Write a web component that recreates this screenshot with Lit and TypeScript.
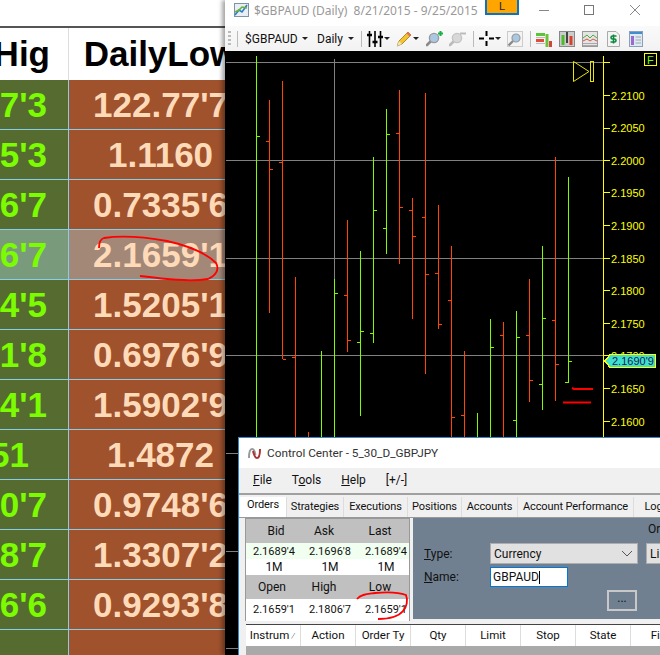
import {LitElement, css, html, svg} from 'lit';
import {customElement} from 'lit/decorators.js';

const ROWS = [
	["7'3", "122.77'7"],
	["5'3", '1.1160'],
	["6'7", "0.7335'6"],
	["6'7", "2.1659'1"],
	["4'5", "1.5205'1"],
	["1'8", "0.6976'9"],
	["4'1", "1.5902'9"],
	['51', '1.4872'],
	["0'7", "0.9748'6"],
	["8'7", "1.3307'2"],
	["6'6", "0.9293'8"],
	['', ''],
];

@customElement('quote-table')
export class QuoteTable extends LitElement {
	render() {
		return html`
			<div class="top"></div>
			<div class="row head">
				<div class="cell left">Hig</div>
				<div class="cell right">DailyLow</div>
			</div>
			${ROWS.map(
				([high, low], i) => html`
					<div class="row body ${i === 3 ? 'selected' : ''}">
						<div class="cell left ${high.length === 2 ? 'short' : ''}">${high}</div>
						<div class="cell right">${low}</div>
					</div>
				`
			)}
		`;
	}

	static styles = css`
		:host {
			display: block;
			width: 253px;
			height: 655px;
			overflow: hidden;
			background: #fff;
			font: bold 35px 'Liberation Sans', Arial, sans-serif;
		}

		.top {
			height: 26px;
			border-bottom: 2px solid #555;
		}

		.row {
			display: grid;
			grid-template-columns: 69px 183px;
			box-sizing: border-box;
		}

		.head {
			height: 52px;
			color: #000;
		}

		.body {
			height: 50px;
			border-bottom: 1px solid #87ceeb;
			background: linear-gradient(90deg, #556b2f 69px, #a0522d 69px);
		}

		.selected {
			background: linear-gradient(90deg, #7a9a7c 69px, #a38878 69px);
		}

		.cell {
			display: flex;
			align-items: center;
			white-space: nowrap;
			overflow: hidden;
		}

		.left {
			justify-content: flex-end;
			padding-right: 21px;
			box-sizing: border-box;
			color: #7cfc00;
		}

		.head .left {
			color: #000;
			padding-right: 18px;
			border-right: 1px solid #ddd;
		}

		.body .left {
			border-right: 1px solid #87ceeb;
		}

		.short {
			padding-right: 39px;
		}

		.right {
			justify-content: center;
			color: #ffdab9;
		}

		.head .right {
			color: #000;
		}
	`;
}

// x index, top, bottom, up bar?, open tick y, close tick y
type Bar = [number, number, number, boolean, number?, number?];

const BARS: Bar[] = [
	[0, 56, 437, true, undefined, 136],
	[1, 100, 313, false, 141, 169],
	[2, 81, 359, false, 162, 359],
	[3, 277, 437, false, 357],
	[4, 432, 437, false],
	[5, 351, 437, true],
	[6, 279, 437, true, undefined, 293],
	[7, 220, 352, false, 295, 340],
	[8, 251, 416, true, 342, 331],
	[9, 157, 343, true, 333, 210],
	[10, 109, 254, true, 228, 134],
	[11, 90, 264, false, 133, 207],
	[12, 198, 319, false, 210, 236],
	[13, 93, 374, false, 217, 274],
	[14, 205, 329, false, 273, 324],
	[15, 246, 437, false, 300, 417],
	[16, 351, 437, false, 415],
	[17, 413, 437, true],
	[18, 319, 437, true, undefined, 347],
	[19, 322, 437, false, 335],
	[20, 311, 437, true, 420, 337],
	[21, 279, 402, false, 335, 380],
	[22, 246, 410, true, 384, 318],
	[23, 157, 401, false, 320, 364],
	[24, 177, 382, true, 382, 361],
];

const AXIS = [
	[95.5, '2.2100'],
	[128, '2.2050'],
	[160.5, '2.2000'],
	[192.5, '2.1950'],
	[225.5, '2.1900'],
	[258.5, '2.1850'],
	[290.5, '2.1800'],
	[323.5, '2.1750'],
	[355.5, '2.1700'],
	[388.5, '2.1650'],
	[421.5, '2.1600'],
] as const;

const GRID = [62.5, 160.5, 258.5, 355.5, 453.5, 551.5, 648.5];

@customElement('chart-window')
export class ChartWindow extends LitElement {
	private bar([i, top, bottom, up, open, close]: Bar) {
		const x = 256.5 + i * 13;
		const color = up ? '#7cfc00' : '#ff4500';
		return svg`
			<g stroke=${color}>
				<line x1=${x} x2=${x} y1=${top} y2=${bottom}></line>
				${open !== undefined ? svg`<line x1=${x - 3.5} x2=${x} y1=${open + 0.5} y2=${open + 0.5}></line>` : ''}
				${close !== undefined ? svg`<line x1=${x} x2=${x + 3.5} y1=${close + 0.5} y2=${close + 0.5}></line>` : ''}
			</g>
		`;
	}

	private caret() {
		return html`<i class="caret"></i>`;
	}

	render() {
		return html`
			<div class="title">
				<svg class="app-icon" width="15" height="14" viewBox="0 0 15 14">
					<rect x="0.5" y="0.5" width="14" height="13" fill="#e8eef4" stroke="#7d93a8"></rect>
					<path d="M1 12 5 7l3 2 5-7" fill="none" stroke="#2a7bd0" stroke-width="1.6"></path>
					<path d="M1 9l4-2 3-3 5 1" fill="none" stroke="#69b52e" stroke-width="1.6"></path>
				</svg>
				<span class="caption">$GBPAUD (Daily)&nbsp; 8/21/2015 - 9/25/2015</span>
				<span class="link">L</span>
				<svg class="controls" width="103" height="16" viewBox="0 0 103 16">
					<path d="M0 9.5H10" stroke="#888" fill="none"></path>
					<rect x="45.5" y="4.5" width="9" height="9" fill="none" stroke="#777"></rect>
					<path d="M91 4 101 14M101 4 91 14" stroke="#888" fill="none"></path>
				</svg>
			</div>
			<div class="toolbar">
				<i class="grip"></i>
				<i class="sep first"></i>
				<span class="label sym">$GBPAUD</span>${this.caret()}
				<span class="label period">Daily</span>${this.caret()}
				<i class="sep s1"></i>
				<svg class="tool sliders" width="16" height="16" viewBox="0 0 16 16">
					<path d="M2.5 0V16M8 0V16M13.5 0V16" stroke="#000" stroke-width="1.6" fill="none"></path>
					<path d="M0 4H5M5.5 11H10.5M11 6H16" stroke="#000" stroke-width="2.4" fill="none"></path>
				</svg>
				${this.caret()}
				<svg class="tool pencil" width="15" height="16" viewBox="0 0 15 16">
					<path d="M0 15 2 10 11 1 14 4 5 13Z" fill="#f4c430" stroke="#9a7a10" stroke-width="0.8"></path>
					<path d="M11 1 14 4 12.5 5.5 9.5 2.5Z" fill="#e8705a"></path>
					<path d="M0 15 2 10 5 13Z" fill="#f3e3b8"></path>
				</svg>
				${this.caret()}
				<svg class="tool zoom-in" width="17" height="17" viewBox="0 0 17 17">
					<path d="M6 10 1 15" stroke="#8a8a8a" stroke-width="2.6" stroke-linecap="round"></path>
					<circle cx="8" cy="8" r="4.6" fill="#a9c8e4" stroke="#9a9a9a" stroke-width="1.4"></circle>
					<path d="M12 3.5H17M14.5 1V6" stroke="#17b04a" stroke-width="2"></path>
				</svg>
				<svg class="tool zoom-out" width="17" height="17" viewBox="0 0 17 17">
					<path d="M6 10 1 15" stroke="#bbb" stroke-width="2.6" stroke-linecap="round"></path>
					<circle cx="8" cy="8" r="4.6" fill="#d8d8d8" stroke="#c4c4c4" stroke-width="1.4"></circle>
					<path d="M11 3.5H17" stroke="#bcbcbc" stroke-width="2"></path>
				</svg>
				<i class="sep s2"></i>
				<svg class="tool cross" width="15" height="15" viewBox="0 0 15 15">
					<path d="M0 7.5H5M10 7.5H15M7.5 0V5M7.5 10V15" stroke="#000" stroke-width="2" fill="none"></path>
				</svg>
				${this.caret()}
				<svg class="tool glass" width="16" height="16" viewBox="0 0 16 16">
					<rect x="0.5" y="0.5" width="15" height="15" fill="#f4f4f4" stroke="#ccc"></rect>
					<path d="M6 10 1.5 14.5" stroke="#8a8a8a" stroke-width="2.4"></path>
					<circle cx="9" cy="7" r="4" fill="#a9c8e4" stroke="#9a9a9a" stroke-width="1.2"></circle>
				</svg>
				<i class="sep s3"></i>
				<svg class="tool t1" width="16" height="16" viewBox="0 0 16 16">
					<path d="M0 2H9V5H0Z" fill="#5cc43a"></path>
					<path d="M0 8H8V11H0Z" fill="#e24a3a"></path>
					<path d="M11 3V16" stroke="#6cc23a" stroke-width="3"></path>
					<path d="M14.5 10V16" stroke="#d2453a" stroke-width="3"></path>
					<path d="M0 6.5H9M0 12.5H9" stroke="#bbb"></path>
				</svg>
				<svg class="tool t2" width="16" height="16" viewBox="0 0 16 16">
					<rect x="0.5" y="0.5" width="15" height="15" fill="#ccc" stroke="#888"></rect>
					<path d="M4 4V14" stroke="#4cbb2c" stroke-width="3"></path>
					<path d="M8 1V12" stroke="#444" stroke-width="2"></path>
					<path d="M12 5V14" stroke="#d94030" stroke-width="3"></path>
				</svg>
				<svg class="tool t3" width="16" height="16" viewBox="0 0 16 16">
					<rect x="0.5" y="0.5" width="15" height="15" fill="#e4e4e4" stroke="#999"></rect>
					<path d="M1 7 5 4l3 3 3-3 4 3" fill="none" stroke="#4cae3a"></path>
					<path d="M1 10l4-2 3 2 3-2 4 2" fill="none" stroke="#d8554a"></path>
					<path d="M1 12.5H15M1 14.5H15" stroke="#aaa"></path>
				</svg>
				<svg class="tool t4" width="13" height="16" viewBox="0 0 13 16">
					<path d="M0.5 0.5H9L12.5 4V15.5H0.5Z" fill="#f4f4f4" stroke="#aaa"></path>
					<path d="M9.5 5H5.5a1.5 1.5 0 0 0 0 3h2a1.5 1.5 0 0 1 0 3H3.5M6.5 3.5V12.5" fill="none" stroke="#0f8a3c" stroke-width="1.6"></path>
				</svg>
				<svg class="tool t5" width="14" height="16" viewBox="0 0 14 16">
					<rect x="0.5" y="0.5" width="13" height="15" fill="#dfe9f4" stroke="#8aa0b8"></rect>
					<rect x="1" y="1" width="12" height="2" fill="#3f8ed0"></rect>
					<rect x="2" y="5" width="3" height="9" fill="#9a6ad0"></rect>
					<path d="M6.5 6H12M6.5 9H12M6.5 12H12" stroke="#9aa"></path>
				</svg>
			</div>
			<svg class="plot" width="435" height="604" viewBox="225 51 435 604" shape-rendering="crispEdges">
				<g stroke="#808080">
					${GRID.map((y) => svg`<line x1="226" x2="603" y1=${y} y2=${y}></line>`)}
					<line x1="334.5" x2="334.5" y1="59" y2="280"></line>
				</g>
				${BARS.map((b) => this.bar(b))}
				<g stroke="#ff0">
					<line x1="603.5" x2="603.5" y1="56" y2="655"></line>
					<line x1="603" x2="610" y1="62.5" y2="62.5"></line>
					${AXIS.map(([y]) => svg`<line x1="603" x2="610" y1=${y} y2=${y}></line>`)}
				</g>
				<g class="axis" shape-rendering="auto">
					${AXIS.map(([y, t]) => svg`<text x="611" y=${y + 4}>${t}</text>`)}
				</g>
				<g fill="none" stroke="#e6e600">
					<path d="M573.5 61.5V81.5L589 71.5Z" shape-rendering="auto"></path>
					<rect x="590.5" y="61.5" width="3" height="20"></rect>
					<rect x="644.5" y="53.5" width="12" height="12" stroke="#ff0"></rect>
				</g>
				<text class="f" x="647" y="63.5" shape-rendering="auto">F</text>
				<path d="M605 361 610 354.5H655.5V367.5H610Z" fill="#40e0d0" stroke="#ff0" stroke-width="1.4"></path>
				<text class="price" x="612" y="365">2.1690'9</text>
				<path d="M572 388 574 389 593 389M563 402.5 591 402.5" fill="none" stroke="#f00" stroke-width="2" shape-rendering="auto"></path>
			</svg>
		`;
	}

	static styles = css`
		:host {
			display: flex;
			flex-direction: column;
			width: 435px;
			height: 655px;
			background: #000;
			box-shadow: -3px 0 4px rgba(0, 0, 0, 0.35);
			font: 12px 'Noto Sans', sans-serif;
		}

		.title {
			height: 26px;
			flex: none;
			display: flex;
			align-items: flex-start;
			background: #fff;
		}

		.app-icon {
			margin: 3px 0 0 9px;
		}

		.caption {
			margin: 2px 0 0 5px;
			width: 231px;
			color: #999;
			white-space: nowrap;
			font-size: 12px;
		}

		.link {
			box-sizing: border-box;
			width: 34px;
			height: 15px;
			background: #ffa500;
			border: 2px solid #0a73c8;
			border-top: 0;
			color: #222;
			font: 11px/12px 'Liberation Sans', sans-serif;
			text-align: center;
		}

		.controls {
			margin: 1px 0 0 20px;
		}

		.toolbar {
			height: 25px;
			flex: none;
			display: flex;
			align-items: center;
			background: linear-gradient(#fafafa, #f2f2f2);
			color: #111;
			white-space: nowrap;
			box-sizing: border-box;
			padding-left: 3px;
		}

		.grip {
			width: 3px;
			height: 16px;
			background: repeating-linear-gradient(#bbb 0 2px, transparent 2px 4px);
		}

		.sep {
			width: 1px;
			height: 16px;
			background: #bbb;
		}

		.first {
			margin-left: 6px;
		}

		.label {
			font: 12px Roboto, sans-serif;
		}

		.sym {
			margin-left: 7px;
			width: 56px;
		}

		.period {
			margin-left: 9px;
			width: 30px;
		}

		.caret {
			width: 0;
			height: 0;
			margin-left: 1px;
			border: 3px solid transparent;
			border-top-color: #222;
			border-bottom: 0;
		}

		.s1 {
			margin-left: 7px;
		}

		.sliders {
			margin-left: 5px;
		}

		.tool + .caret {
			margin-left: 1px;
		}

		.pencil {
			margin-left: 7px;
		}

		.zoom-in {
			margin-left: 7px;
		}

		.zoom-out {
			margin-left: 6px;
		}

		.s2 {
			margin-left: 7px;
		}

		.cross {
			margin-left: 5px;
		}

		.glass {
			margin-left: 6px;
		}

		.s3 {
			margin-left: 7px;
		}

		.t1 {
			margin-left: 5px;
		}

		.t2 {
			margin-left: 7px;
		}

		.t3 {
			margin-left: 7px;
		}

		.t4 {
			margin-left: 9px;
		}

		.t5 {
			margin-left: 9px;
		}

		.plot {
			display: block;
			flex: none;
		}

		.axis text {
			font: 11px 'Liberation Sans', sans-serif;
			fill: #ff0;
		}

		.f {
			font: 11px 'Liberation Sans', sans-serif;
			fill: #7cfc00;
		}

		.price {
			font: 11px 'Liberation Sans', sans-serif;
			fill: #1c1c4a;
		}
	`;
}

const TABS = ['Orders', 'Strategies', 'Executions', 'Positions', 'Accounts', 'Account Performance', 'Log'];
const COLUMNS = ['Instrum', 'Action', 'Order Ty', 'Qty', 'Limit', 'Stop', 'State', 'Fill'];

@customElement('control-center')
export class ControlCenter extends LitElement {
	render() {
		return html`
			<div class="title">
				<svg width="13" height="11" viewBox="0 0 13 11">
					<path d="M1 10C1 4 2 1 4 1c2 0 3 3 3.500 6" fill="none" stroke="#999" stroke-width="2"></path>
					<path d="M5 3c1 4 2 7 4 7 2 0 3-4 3-9" fill="none" stroke="#a33" stroke-width="2"></path>
				</svg>
				<span>Control Center - 5_30_D_GBPJPY</span>
			</div>
			<div class="menu">
				<span><u>F</u>ile</span>
				<span>T<u>o</u>ols</span>
				<span><u>H</u>elp</span>
				<span>[+/-]</span>
			</div>
			<div class="tabs">
				${TABS.map((t, i) => html`<div class="tab ${i === 0 ? 'active' : ''}">${t}</div>`)}
			</div>
			<div class="panels">
				<div class="quote">
					<div class="q-row shade h1"><span>Bid</span><span>Ask</span><span>Last</span></div>
					<div class="q-row tint"><span>2.1689'4</span><span>2.1696'8</span><span>2.1689'4</span></div>
					<div class="q-row plain"><span>1M</span><span>1M</span><span>1M</span></div>
					<div class="q-row shade h2"><span>Open</span><span>High</span><span>Low</span></div>
					<div class="q-row last"><span>2.1659'1</span><span>2.1806'7</span><span>2.1659'1</span></div>
				</div>
				<div class="form">
					<span class="or">Or</span>
					<label class="l-type"><u>T</u>ype:</label>
					<div class="select">
						Currency
						<svg width="12" height="7" viewBox="0 0 12 7"><path d="M1 1 6 6 11 1" fill="none" stroke="#555"></path></svg>
					</div>
					<div class="select second">Lin</div>
					<label class="l-name"><u>N</u>ame:</label>
					<div class="input">GBPAUD<i></i></div>
					<div class="more">...</div>
				</div>
			</div>
			<div class="columns">
				${COLUMNS.map(
					(c, i) => html`<div class="col">${c}${i === 0 ? html`<svg width="5" height="7" viewBox="0 0 5 7"><path d="M0.500 6.500 4 1" stroke="#aaa" fill="none"></path></svg>` : ''}</div>`
				)}
			</div>
			<div class="rest"></div>
		`;
	}

	static styles = css`
		:host {
			display: flex;
			flex-direction: column;
			width: 422px;
			height: 218px;
			box-sizing: border-box;
			background: #f0f0f0;
			border: solid #2f86c8;
			border-width: 1px 0 0 1px;
			overflow: hidden;
			font: 12px Roboto, sans-serif;
			color: #111;
			white-space: nowrap;
		}

		.title {
			height: 30px;
			flex: none;
			display: flex;
			align-items: center;
			gap: 6px;
			padding-left: 9px;
			background: #fff;
			color: #333;
			font-size: 11.8px;
		}

		.menu {
			height: 24px;
			flex: none;
			display: flex;
			align-items: center;
			gap: 20px;
			padding-left: 14px;
		}

		.tabs {
			margin-top: 1px;
			border-top: 2px solid #a0a0a0;
			padding-top: 2px;
			height: 24px;
			flex: none;
			box-sizing: border-box;
			display: grid;
			grid-template-columns: 47px 57px 64px 54px 56px 116px 40px;
			padding-left: 1px;
			font-size: 11px;
			letter-spacing: -0.1px;
		}

		.tab {
			line-height: 20px;
			text-align: center;
			border-right: 1px solid #ddd;
		}

		.active {
			background: #fff;
			line-height: 16px;
		}

		.panels {
			height: 104px;
			flex: none;
			display: flex;
			gap: 3px;
			padding-left: 6px;
			box-sizing: border-box;
			border-top: 1px solid #999;
		}

		.quote {
			width: 165px;
			flex: none;
			overflow: hidden;
			box-sizing: border-box;
			border: solid #999;
			border-width: 1px 1px 0 1px;
			background: #fff;
			font-size: 11px;
		}

		.q-row {
			display: grid;
			grid-template-columns: 56px 56px 56px;
			align-items: center;
			text-align: center;
		}

		.shade {
			background: #c0c0c0;
			height: 24px;
			font-size: 12px;
		}

		.h1 {
			grid-template-columns: 60px 36px 76px;
		}

		.h2 {
			grid-template-columns: 52px 52px 60px;
		}

		.tint {
			background: #f0fff0;
			height: 16px;
		}

		.plain {
			height: 16px;
			font-size: 12px;
		}

		.last {
			height: 20px;
		}

		.form {
			flex: 1;
			min-width: 0;
			box-sizing: border-box;
			background: #708090;
			display: grid;
			grid-template-columns: 66px 148px 1fr;
			grid-template-rows: 22px 21px 20px 21px;
			row-gap: 3px;
			column-gap: 0;
			padding-left: 11px;
			height: 101px;
			color: #111;
		}

		.or {
			grid-column: 3;
			grid-row: 1;
			padding-left: 10px;
			align-self: center;
		}

		.l-type,
		.l-name {
			grid-column: 1;
			align-self: center;
		}

		.l-type {
			grid-row: 2;
		}

		.l-name {
			grid-row: 3;
		}

		.select {
			grid-row: 2;
			grid-column: 2;
			display: flex;
			align-items: center;
			justify-content: space-between;
			padding: 0 4px 0 3px;
			background: #e1e1e1;
			border: 1px solid #adadad;
		}

		.second {
			grid-column: 3;
			margin-left: 8px;
		}

		.input {
			grid-row: 3;
			grid-column: 2;
			width: 78px;
			box-sizing: border-box;
			display: flex;
			align-items: center;
			padding-left: 2px;
			background: #fff;
			border: 1px solid #0078d7;
		}

		.input i {
			width: 1px;
			height: 13px;
			background: #000;
		}

		.more {
			grid-row: 4;
			grid-column: 2;
			justify-self: end;
			width: 30px;
			box-sizing: border-box;
			text-align: center;
			line-height: 13px;
			border: 2px solid #c8c8c8;
			background: #708090;
			margin-right: 1px;
		}

		.columns {
			margin: 3px 0 0 7px;
			height: 22px;
			flex: none;
			box-sizing: border-box;
			border-top: 1px solid #444;
			background: #fff;
			display: grid;
			grid-template-columns: repeat(8, 55px);
			font-size: 11.5px;
		}

		.col {
			text-align: center;
			line-height: 20px;
			border-right: 1px solid #ddd;
			overflow: hidden;
		}

		.col svg {
			margin-left: 2px;
		}

		.rest {
			flex: 1;
			margin-left: 7px;
			background: #a9a9a9;
		}
	`;
}

@customElement('app-root')
export class AppRoot extends LitElement {
	render() {
		return html`
			<quote-table></quote-table>
			<chart-window></chart-window>
			<control-center></control-center>
			<svg class="marks" width="660" height="655" viewBox="0 0 660 655">
				<path d="M99 248C99 243 100 239 104 238 C125 235 150 238 167 241 C185 245 205 252 216 263 C220 270 215 276 208 279 C190 282 165 279 140 276"></path>
				<path d="M357 599C361 594 368 594 375 593 C386 592 398 592 406 595 C408 600 407 607 403 611 C398 617 388 619 378 619"></path>
			</svg>
		`;
	}

	static styles = css`
		:host {
			display: block;
			position: relative;
			width: 660px;
			height: 655px;
			overflow: hidden;
		}

		chart-window {
			position: absolute;
			left: 225px;
			top: 0;
		}

		control-center {
			position: absolute;
			left: 238px;
			top: 437px;
		}

		.marks {
			position: absolute;
			left: 0;
			top: 0;
			pointer-events: none;
		}

		.marks path {
			fill: none;
			stroke: #f00;
			stroke-width: 1.8;
		}
	`;
}

declare global {
	interface HTMLElementTagNameMap {
		'app-root': AppRoot;
	}
}
